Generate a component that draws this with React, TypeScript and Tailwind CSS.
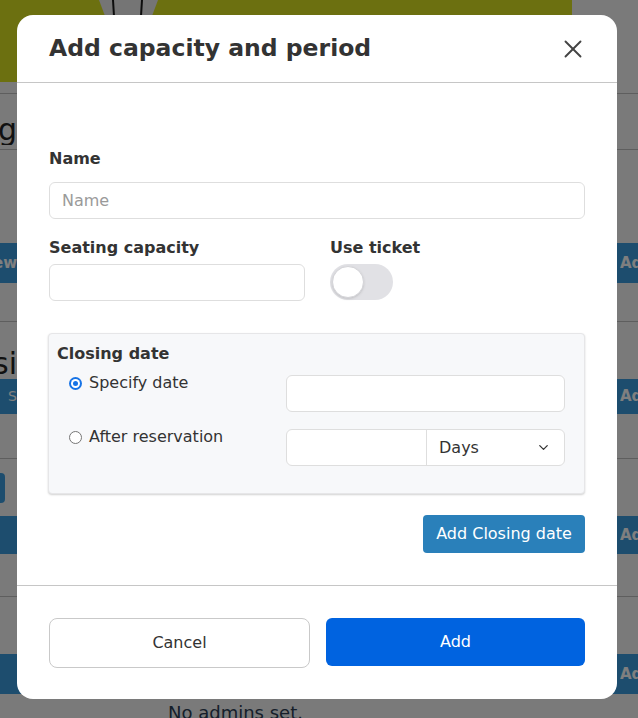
import React from 'react';
import { X, ChevronDown } from 'lucide-react';

// clipped strips of the page behind the dialog
const LeftText: React.FC<{ text: string; className?: string }> = ({ text, className }) => (
  <div className="flex w-[17px] shrink-0 justify-end overflow-hidden whitespace-nowrap">
    <span className={className}>{text}</span>
  </div>
);

const RightText: React.FC<{ text: string }> = ({ text }) => (
  <div className="w-[18px] shrink-0 overflow-hidden whitespace-nowrap text-[15px] font-bold text-white">{text}</div>
);

const BackgroundPage = () => (
  <div className="flex flex-col">
    <div className="flex h-[82px]">
      <div className="relative w-[572px] bg-[#d8e021]">
        <svg className="absolute left-[97px] top-0" width="64" height="16" viewBox="0 0 64 16">
          <path d="M2 0 L61 0 L55 16 L8 16 Z" fill="#eaeaea" />
          <path d="M16 0 L17 16 M45 0 L44 16" stroke="#1b1b1b" strokeWidth="2" />
        </svg>
      </div>
    </div>
    <div className="h-[11px]" />
    <div className="flex h-[57px] items-end border-y border-[#bdbdbd] pb-[4px]">
      <LeftText text="Setting" className="text-[30px] leading-none text-[#222]" />
    </div>
    <div className="h-[93px]" />
    <div className="flex h-[40px] items-center justify-between bg-[#3a9bdc]">
      <LeftText text="Preview" className="text-[15px] font-bold text-white" />
      <RightText text="Add" />
    </div>
    <div className="h-[39px] border-b border-[#bdbdbd]" />
    <div className="flex h-[57px] items-end">
      <LeftText text="Sessi" className="text-[30px] leading-none text-[#222]" />
    </div>
    <div className="flex h-[35px] items-center justify-between bg-[#3a9bdc]">
      <LeftText text="S" className="text-[14px] text-white" />
      <RightText text="Add" />
    </div>
    <div className="h-[45px] border-b border-[#bdbdbd]" />
    <div className="flex h-[57px] items-center">
      <div className="ml-[-10px] h-[30px] w-[15px] rounded-[4px] bg-[#3a9bdc]" />
    </div>
    <div className="flex h-[38px] items-center justify-between bg-[#3a9bdc]">
      <div />
      <RightText text="Add" />
    </div>
    <div className="h-[43px] border-b border-[#bdbdbd]" />
    <div className="h-[57px]" />
    <div className="flex h-[40px] items-center justify-between bg-[#3a9bdc]">
      <div />
      <RightText text="Add" />
    </div>
    <div className="pl-[168px] pt-[5px] text-[18px] text-[#2c3e55]">No admins set.</div>
  </div>
);

const Radio: React.FC<{ checked?: boolean }> = ({ checked }) =>
  checked ? (
    <span className="flex h-[13px] w-[13px] shrink-0 items-center justify-center rounded-full bg-[#1673e6]">
      <span className="flex h-[9px] w-[9px] items-center justify-center rounded-full bg-white">
        <span className="h-[5px] w-[5px] rounded-full bg-[#1673e6]" />
      </span>
    </span>
  ) : (
    <span className="h-[13px] w-[13px] shrink-0 rounded-full border border-[#767676] bg-white" />
  );

const Modal = () => (
  <div className="flex h-[684px] w-[600px] flex-col overflow-hidden rounded-[16px] bg-white text-[16px] text-[#333]">
    {/* header */}
    <div className="flex h-[71px] items-center justify-between border-b border-[#c6c6c6] pl-8 pr-[29px]">
      <h2 className="text-[23.5px] font-bold text-[#333]">Add capacity and period</h2>
      <X size={30} strokeWidth={1.5} className="text-[#444]" />
    </div>

    {/* body */}
    <div className="flex flex-col border-b border-[#c6c6c6] px-8 pb-8 pt-[65px]">
      <label className="mb-3 font-bold leading-[22px]">Name</label>
      <input
        placeholder="Name"
        className="h-[37px] rounded-md border border-[#dedede] px-3 text-[16px] outline-none placeholder:text-[#9a9a9a]"
      />

      <div className="mt-[18px] flex gap-[25px]">
        <div className="flex w-[256px] flex-col gap-[5px]">
          <label className="font-bold leading-[22px]">Seating capacity</label>
          <input className="h-[37px] rounded-md border border-[#dedede] px-3 outline-none" />
        </div>
        <div className="flex flex-col gap-[5px]">
          <label className="font-bold leading-[22px]">Use ticket</label>
          <div className="flex h-[36px] w-[63px] items-center rounded-full bg-[#e1e1e5] px-[2px]">
            <span className="h-[32px] w-[32px] rounded-full border border-[#d4d4d8] bg-white shadow-sm" />
          </div>
        </div>
      </div>

      <div className="ml-[-1px] mt-8 flex h-[161px] w-[537px] flex-col rounded-[4px] border border-[#e6e6e8] bg-[#f7f8fa] pb-[27px] pl-2 pr-[19px] pt-[9px] shadow-[0_1px_2px_rgba(0,0,0,0.18)]">
        <div className="font-bold leading-[22px]">Closing date</div>
        <div className="mt-[10px] flex flex-col gap-[17px]">
          <div className="flex items-start">
            <div className="-mt-[3px] flex w-[229px] items-center gap-[7px] pl-3 leading-[22px] text-[#333]">
              <Radio checked />
              <span>Specify date</span>
            </div>
            <input className="h-[37px] flex-1 rounded-md border border-[#dedede] bg-white px-3 outline-none" />
          </div>
          <div className="flex items-start">
            <div className="-mt-[3px] flex w-[229px] items-center gap-[7px] pl-3 leading-[22px] text-[#333]">
              <Radio />
              <span>After reservation</span>
            </div>
            <div className="flex h-[37px] flex-1 overflow-hidden rounded-md border border-[#dedede] bg-white">
              <input className="w-[140px] border-r border-[#dedede] px-3 outline-none" />
              <div className="flex flex-1 items-center justify-between pl-3 pr-[13px]">
                <span>Days</span>
                <ChevronDown size={15} strokeWidth={2} className="text-[#333]" />
              </div>
            </div>
          </div>
        </div>
      </div>

      <div className="mt-[21px] flex justify-end">
        <button className="h-[38px] w-[162px] rounded-[4px] bg-[#2a80ba] text-[16px] text-white">
          Add Closing date
        </button>
      </div>
    </div>

    {/* footer */}
    <div className="flex gap-4 px-8 pb-[31px] pt-8">
      <button className="h-[50px] flex-1 rounded-lg border border-[#c9c9c9] bg-white text-[#333]">Cancel</button>
      <button className="h-[48px] flex-1 rounded-md bg-[#0063e0] text-white">Add</button>
    </div>
  </div>
);

export default function App() {
  return (
    <div className="relative h-[718px] w-[638px] overflow-hidden bg-[#f4f4f4] font-['DejaVu_Sans',sans-serif]">
      <BackgroundPage />
      <div className="absolute inset-0 bg-black/50" />
      <div className="absolute inset-0 pl-[17px] pt-[15px]">
        <Modal />
      </div>
    </div>
  );
}
